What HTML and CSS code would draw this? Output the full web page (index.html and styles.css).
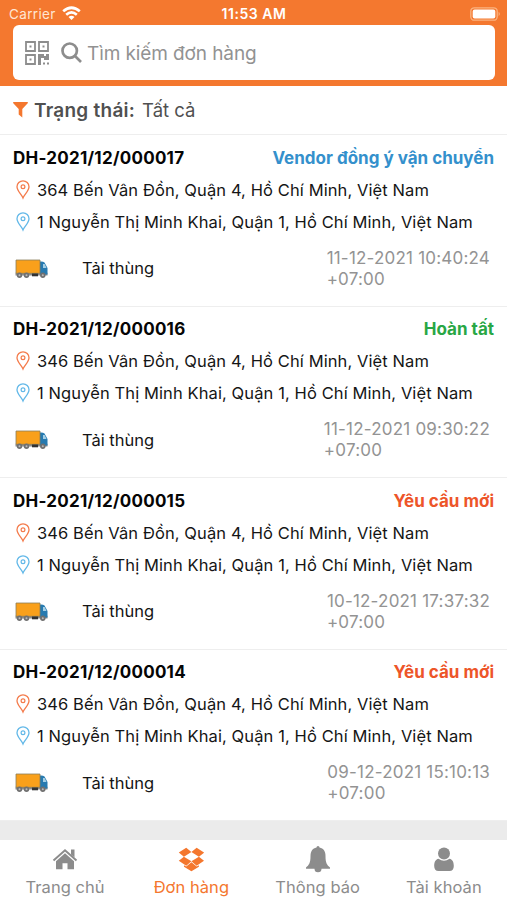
FILE: index.html
```html
<!DOCTYPE html>
<html lang="vi">
<head>
<meta charset="utf-8">
<meta name="viewport" content="width=device-width, initial-scale=1">
<title>Đơn hàng</title>
<link rel="stylesheet" href="styles.css">
</head>
<body>
<svg class="symbols" aria-hidden="true">
  <symbol id="pin" viewBox="0 0 14 20">
    <path d="M7 18C5.600 14.600 1 10.800 1 6.800a6 6 0 0 1 12 0C13 10.800 8.400 14.600 7 18Z" fill="none" stroke="currentColor" stroke-width="1.300"/>
    <circle cx="7" cy="6.800" r="1.900" fill="none" stroke="currentColor" stroke-width="1.200"/>
  </symbol>
  <symbol id="truck" viewBox="0 0 34 20">
    <path d="M.5 13.800h32v2.700H.5z" fill="#8b8b8b"/>
    <path d="M25 2.500q3-.3 4.500 1L32.500 9v6.500H25z" fill="#277ab0"/>
    <path d="M28 5h1.700l1.800 4H28z" fill="#a5cfe5"/>
    <path d="M1 1h24v13.300H1z" fill="#f9a01b" stroke="#8b7e5b" stroke-width=".8"/>
    <path d="M17 14.500h6v2.800h-6z" fill="#333"/>
    <g fill="#707070"><circle cx="4.500" cy="16.300" r="2.700"/><circle cx="11.500" cy="16.300" r="2.700"/><circle cx="27.800" cy="16.300" r="2.700"/></g>
    <g fill="#bbb"><circle cx="4.500" cy="16.300" r="1"/><circle cx="11.500" cy="16.300" r="1"/><circle cx="27.800" cy="16.300" r="1"/></g>
  </symbol>
</svg>
<div class="app">
  <header class="header">
    <div class="status">
      <div class="carrier"><span>Carrier</span>
        <svg width="19" height="15" viewBox="0 0 19 15"><g fill="none" stroke="#fff" stroke-width="2.700"><path d="M1.200 5.300Q9.500-1.800 17.800 5.300"/><path d="M4.200 8.700Q9.500 4.200 14.800 8.700"/></g><path d="M6.500 10.900Q9.500 8.500 12.500 10.900L9.500 14Z" fill="#fff"/></svg>
      </div>
      <span class="clock">11:53 AM</span>
      <svg class="battery" width="31" height="14" viewBox="0 0 31 14"><rect x=".8" y=".8" width="26.400" height="12.400" rx="3.500" fill="none" stroke="#fab381" stroke-width="1.300"/><rect x="2.700" y="2.500" width="22.600" height="9" rx="2" fill="#fff"/><path d="M28.600 4.800Q31 7 28.600 9.200Z" fill="#fab381"/></svg>
    </div>
    <div class="search">
      <svg width="24" height="24" viewBox="0 0 24 24"><g fill="none" stroke="#8d8d8d" stroke-width="1.800"><path d="M1 1h9v9H1zM14 1h9v9h-9zM1 14h9v9H1z"/></g><path fill="#8d8d8d" d="M4.500 4.500h2v2h-2zM17.500 4.500h2v2h-2zM4.500 17.500h2v2h-2zM13 13h6v2h2v-2h3v6h-5v-2h-3v7h-3zM18 21.500h2v2h-2zM22 21.500h2v2h-2z"/></svg>
      <svg class="lens" width="21" height="21" viewBox="0 0 21 21"><g fill="none" stroke="#8d8d8d" stroke-width="2.700"><circle cx="8.700" cy="8.700" r="7.200"/><path d="M14 14l6 6"/></g></svg>
      <span class="placeholder">Tìm kiếm đơn hàng</span>
    </div>
  </header>
  <div class="filter">
    <svg width="15" height="16" viewBox="0 0 15 16"><path fill="#f4772e" d="M.5 0h14q.7.600.2 1.200L9.300 7v8.500L5.700 12.500V7L.3 1.200Q-.2.600.5 0Z"/></svg>
    <strong>Trạng thái:</strong><span class="value">Tất cả</span>
  </div>
  <main class="orders">
    <article class="order">
      <div class="top"><b class="code">DH-2021/12/000017</b><b class="state blue">Vendor đồng ý vận chuyển</b></div>
      <div class="place from"><svg><use href="#pin"/></svg><span>364 Bến Vân Đồn, Quận 4, Hồ Chí Minh, Việt Nam</span></div>
      <div class="place to"><svg><use href="#pin"/></svg><span>1 Nguyễn Thị Minh Khai, Quận 1, Hồ Chí Minh, Việt Nam</span></div>
      <div class="bottom"><svg><use href="#truck"/></svg><span class="kind">Tải thùng</span><time>11-12-2021 10:40:24<br>+07:00</time></div>
    </article>
    <article class="order">
      <div class="top"><b class="code">DH-2021/12/000016</b><b class="state green">Hoàn tất</b></div>
      <div class="place from"><svg><use href="#pin"/></svg><span>346 Bến Vân Đồn, Quận 4, Hồ Chí Minh, Việt Nam</span></div>
      <div class="place to"><svg><use href="#pin"/></svg><span>1 Nguyễn Thị Minh Khai, Quận 1, Hồ Chí Minh, Việt Nam</span></div>
      <div class="bottom"><svg><use href="#truck"/></svg><span class="kind">Tải thùng</span><time>11-12-2021 09:30:22<br>+07:00</time></div>
    </article>
    <article class="order">
      <div class="top"><b class="code">DH-2021/12/000015</b><b class="state red">Yêu cầu mới</b></div>
      <div class="place from"><svg><use href="#pin"/></svg><span>346 Bến Vân Đồn, Quận 4, Hồ Chí Minh, Việt Nam</span></div>
      <div class="place to"><svg><use href="#pin"/></svg><span>1 Nguyễn Thị Minh Khai, Quận 1, Hồ Chí Minh, Việt Nam</span></div>
      <div class="bottom"><svg><use href="#truck"/></svg><span class="kind">Tải thùng</span><time>10-12-2021 17:37:32<br>+07:00</time></div>
    </article>
    <article class="order">
      <div class="top"><b class="code">DH-2021/12/000014</b><b class="state red">Yêu cầu mới</b></div>
      <div class="place from"><svg><use href="#pin"/></svg><span>346 Bến Vân Đồn, Quận 4, Hồ Chí Minh, Việt Nam</span></div>
      <div class="place to"><svg><use href="#pin"/></svg><span>1 Nguyễn Thị Minh Khai, Quận 1, Hồ Chí Minh, Việt Nam</span></div>
      <div class="bottom"><svg><use href="#truck"/></svg><span class="kind">Tải thùng</span><time>09-12-2021 15:10:13<br>+07:00</time></div>
    </article>
  </main>
  <nav class="tabs">
    <a class="tab"><svg viewBox="0 0 26 28"><path d="M1.500 14.500L13 4.300l11.500 10.200" fill="none" stroke="currentColor" stroke-width="2"/><path fill="currentColor" d="M19 3.500h3.500v8L19 8.500zM13 7.300l9 8v8h-6.500v-6h-5v6H4v-8z"/></svg><span>Trang chủ</span></a>
    <a class="tab active"><svg viewBox="0 0 26 28"><path transform="translate(-.2 23.300) scale(.0152 -.0152)" fill="currentColor" d="M402 829l494-305-342-285-490 319zM1388 274v-108l-490-293v-1l-1 1-1-1v1l-489 293v108l147-96 342 284v2l1-1 1 1v-2l343-284zM554 1418l342-285-494-304-338 270zM1390 829l338-271-489-319-343 285zM1239 1418l489-319-338-270-494 304z"/></svg><span>Đơn hàng</span></a>
    <a class="tab"><svg viewBox="0 0 26 28"><path fill="currentColor" d="M11.500 1.500a1.500 1.500 0 0 1 3 0C18.500 2.200 20.500 5.500 20.500 10c0 7 1.500 9 4.500 11.500v1.200h-8.500a3.500 3.500 0 0 1-7 0H1v-1.200C4 19 5.500 17 5.500 10c0-4.500 2-7.800 6-8.500Z"/></svg><span>Thông báo</span></a>
    <a class="tab"><svg viewBox="0 0 26 28"><circle cx="13" cy="7.500" r="6" fill="currentColor"/><path fill="currentColor" d="M7.500 12.700q5.500 4.200 11 0c3.300.6 4.300 3.800 4.300 7.200 0 3-1.500 5-4.300 5h-11c-2.800 0-4.300-2-4.300-5 0-3.400 1-6.600 4.300-7.200Z"/></svg><span>Tài khoản</span></a>
  </nav>
</div>
</body>
</html>
```
FILE: styles.css
```css
* { box-sizing: border-box; }
body { margin: 0; background: #fff; color: #151515; font-family: Inter, "Liberation Sans", sans-serif; }
svg { display: block; flex: none; }
.symbols { position: absolute; width: 0; height: 0; }
.app { width: 507px; height: 900px; display: flex; flex-direction: column; background: #ebebeb; overflow: hidden; }
.header { height: 86px; flex: none; padding: 0 12px 0 13px; background: #f4782f; }
.status { height: 25px; display: grid; grid-template-columns: 1fr auto 1fr; align-items: center; padding-top: 2px; color: #fff; font-size: 13.500px; }
.carrier { display: flex; align-items: center; gap: 6px; margin-left: -4px; color: #ffe6d3; letter-spacing: .35px; }
.clock { font-size: 14px; font-weight: 600; letter-spacing: .55px; }
.battery { justify-self: end; margin-right: -6px; }
.search { height: 55px; display: flex; align-items: center; padding: 0 12px; background: #fff; border-radius: 6px; }
.lens { margin-left: 12px; }
.placeholder { margin: 1px 0 0 5px; color: #929292; font-size: 19px; letter-spacing: -.1px; white-space: nowrap; }
.filter { height: 49px; flex: none; display: flex; align-items: center; padding-left: 13px; border-bottom: 1px solid #eee; background: #fff; color: #505050; font-size: 18.500px; }
.filter strong { margin-left: 6px; font-size: 19px; font-weight: 600; letter-spacing: .25px; }
.filter .value { margin-left: 7px; }
.orders { flex: none; }
.order { height: 171.500px; padding: 6.500px 13px 0; border-bottom: 1px solid #eee; background: #fff; font-size: 16.500px; }
.top { display: flex; justify-content: space-between; height: 32px; align-items: center; }
.code { font-size: 17px; font-weight: 700; color: #050505; letter-spacing: .25px; }
.state { font-size: 17px; font-weight: 700; letter-spacing: 0; }
.blue { color: #3490cc; }
.green { color: #28a745; }
.red { color: #ed5529; }
.place { height: 32.300px; display: flex; align-items: center; white-space: nowrap; letter-spacing: .1px; }
.place svg { width: 14px; height: 20px; margin: 0 7px 0 3px; }
.from svg { color: #f47b4b; }
.to svg { color: #62b8e8; }
.bottom { height: 60px; display: flex; align-items: center; }
.bottom svg { width: 34px; height: 20px; margin: 1px 0 0 2px; }
.kind { margin-left: 33px; }
time { margin: 1px 4px 0 auto; color: #939393; line-height: 21px; font-size: 17px; letter-spacing: .2px; }
.tabs { height: 60px; flex: none; margin-top: auto; padding-left: 2px; display: grid; grid-template-columns: repeat(4, 1fr); background: #fff; color: #8c8c8c; }
.tab { display: flex; flex-direction: column; align-items: center; padding-top: 6px; font-size: 16.500px; letter-spacing: .05px; }
.tab svg { width: 26px; height: 28px; }
.tab span { line-height: 22px; margin-top: 2px; }
.tab.active { color: #f4772e; }
```
